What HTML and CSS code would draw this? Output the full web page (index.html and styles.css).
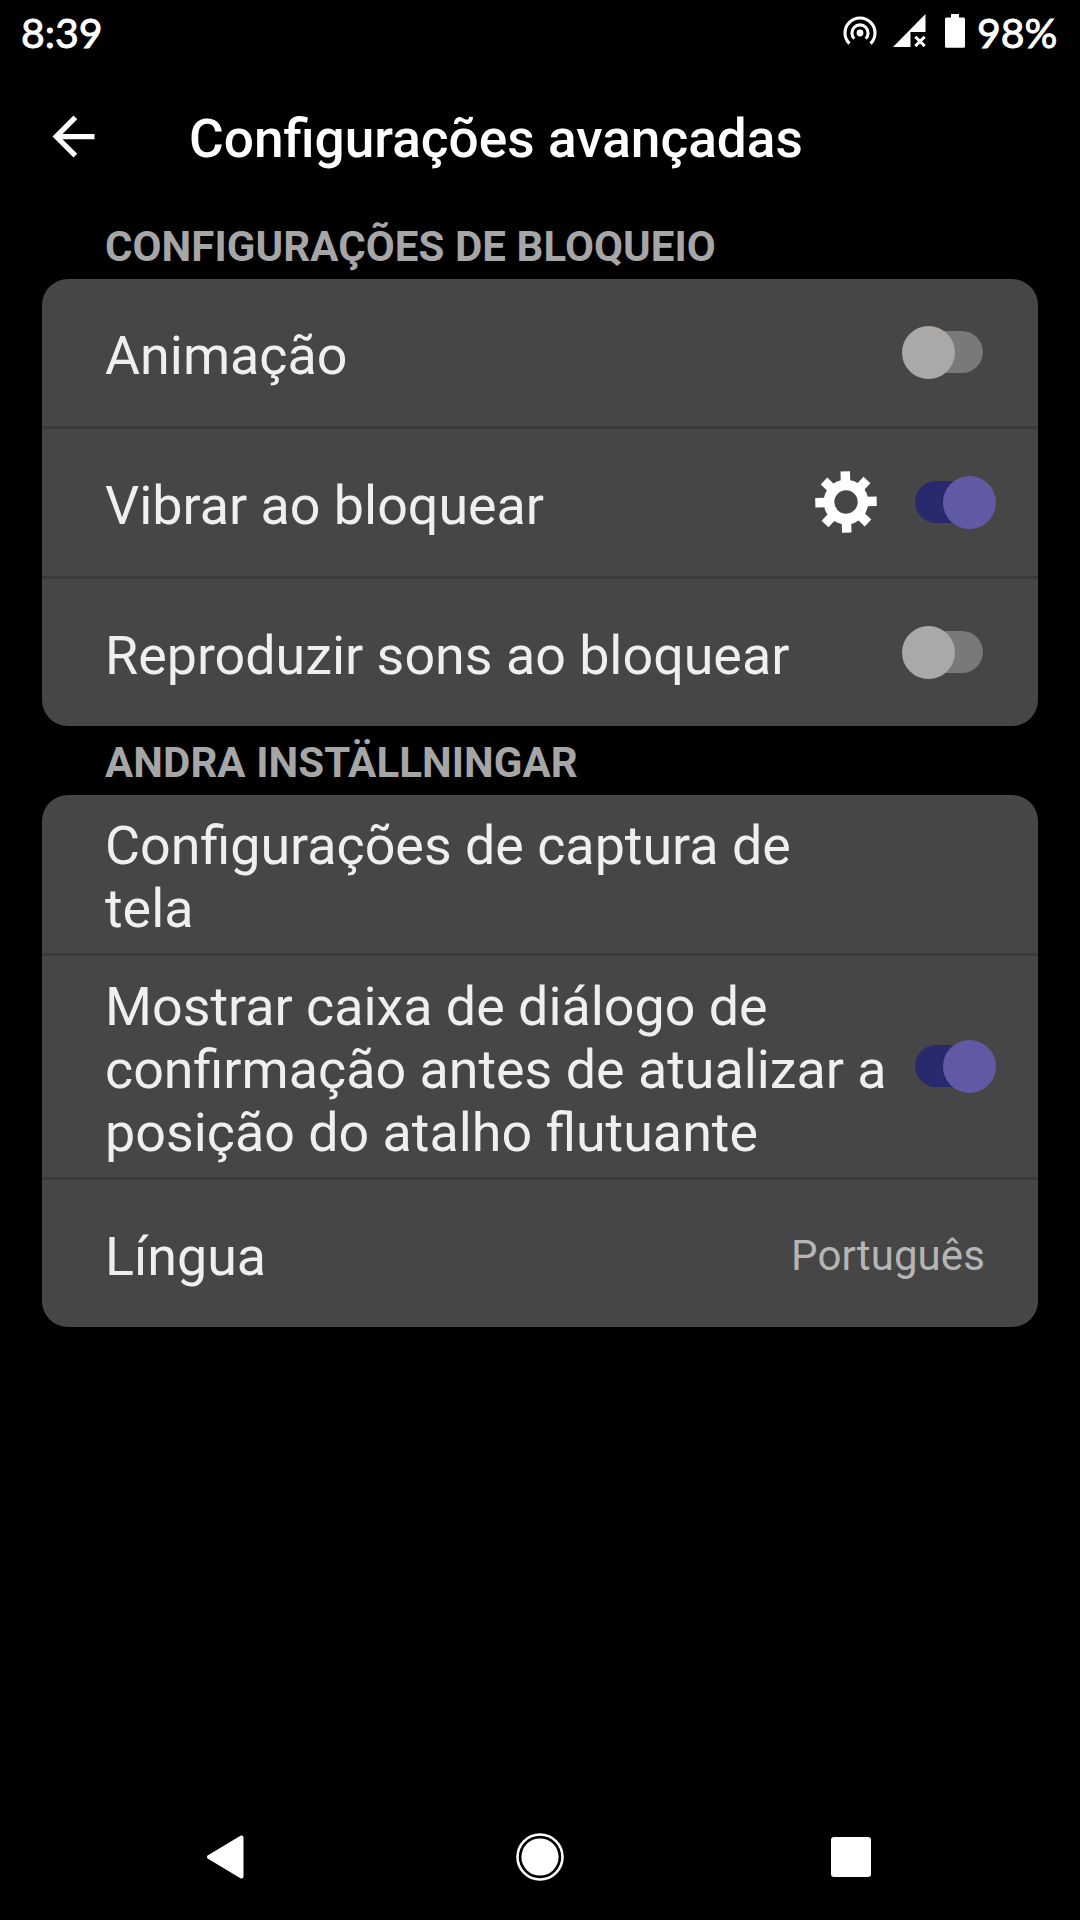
FILE: index.html
```html
<!DOCTYPE html>
<html lang="pt-BR">
<head>
  <meta charset="UTF-8" />
  <meta name="viewport" content="width=device-width, initial-scale=1.0"/>
  <title>Configurações avançadas</title>
  <link rel="stylesheet" href="styles.css">
</head>
<body>

<div class="status-bar">
  <span class="hora">8:39</span>
  <svg class="icone-hotspot" width="34" height="34" viewBox="0 0 34 34">
    <circle cx="17" cy="17" r="3.4" fill="#fff"/>
    <path d="M11.3 22.7A8.1 8.1 0 1 1 22.7 22.7M6.4 27.6A15 15 0 1 1 27.6 27.6" fill="none" stroke="#fff" stroke-width="3.1"/>
  </svg>
  <svg class="icone-sinal" width="33" height="33" viewBox="0 0 33 33">
    <path d="M0 33L32.5 0V18H17.5V33Z" fill="#fff"/>
    <path d="M22.3 22.7L31.7 32.1M31.7 22.7L22.3 32.1" stroke="#fff" stroke-width="3"/>
  </svg>
  <svg class="icone-bateria" width="20" height="34" viewBox="0 0 20 34">
    <path d="M6 0H14V3.5H18.5Q20 3.5 20 5V32.3Q20 33.8 18.5 33.8H1.5Q0 33.8 0 32.3V5Q0 3.5 1.5 3.5H6Z" fill="#fff"/>
  </svg>
  <span class="porcentagem">98%</span>
</div>

<header class="topo">
  <svg class="voltar" width="63" height="63" viewBox="0 0 24 24">
    <path d="M20 11H7.83l5.59-5.59L12 4l-8 8 8 8 1.41-1.41L7.83 13H20v-2z" fill="#fff"/>
  </svg>
  <h1>Configurações avançadas</h1>
</header>

<main>
  <h2>CONFIGURAÇÕES DE BLOQUEIO</h2>
  <div class="cartao">
    <div class="linha">
      <span class="texto">Animação</span>
      <div class="chave"></div>
    </div>
    <div class="linha">
      <span class="texto">Vibrar ao bloquear</span>
      <svg class="engrenagem" width="62" height="62" viewBox="-31 -31 62 62">
        <g transform="rotate(-1.4)" fill="none" stroke="#fff">
          <circle r="17" stroke-width="10.6"/>
          <path stroke-width="9.5" d="M0 -20V-30.7M0 20V30.7M-20 0H-30.7M20 0H30.7M14 -14L21.5 -21.5M14 14L21.5 21.5M-14 14L-21.5 21.5M-14 -14L-21.5 -21.5"/>
        </g>
      </svg>
      <div class="chave ligada"></div>
    </div>
    <div class="linha">
      <span class="texto">Reproduzir sons ao bloquear</span>
      <div class="chave"></div>
    </div>
  </div>

  <h2>ANDRA INSTÄLLNINGAR</h2>
  <div class="cartao">
    <div class="linha">
      <span class="texto">Configurações de captura de<br>tela</span>
    </div>
    <div class="linha">
      <span class="texto">Mostrar caixa de diálogo de<br>confirmação antes de atualizar a<br>posição do atalho flutuante</span>
      <div class="chave ligada"></div>
    </div>
    <div class="linha">
      <span class="texto">Língua</span>
      <span class="valor">Português</span>
    </div>
  </div>
</main>

<nav class="navegacao">
  <svg width="38" height="44" viewBox="0 0 38 44">
    <path d="M35.5 2.5V41.5L3 22Z" fill="#fff" stroke="#fff" stroke-width="4" stroke-linejoin="round"/>
  </svg>
  <svg class="inicio" width="48" height="48" viewBox="0 0 48 48">
    <circle cx="24" cy="24" r="22.5" fill="none" stroke="#fff" stroke-width="2.6"/>
    <circle cx="24" cy="24" r="18.6" fill="#fff"/>
  </svg>
  <svg width="40" height="40" viewBox="0 0 40 40">
    <rect width="40" height="40" rx="3" fill="#fff"/>
  </svg>
</nav>

</body>
</html>
```
FILE: styles.css
```css
* {
  box-sizing: border-box;
}
body {
  margin: 0;
  height: 1920px;
  display: flex;
  flex-direction: column;
  background-color: #000;
  color: #fff;
  font-family: Roboto, sans-serif;
  overflow: hidden;
}
svg {
  display: block;
  flex-shrink: 0;
}

/* Barra de status */
.status-bar {
  display: flex;
  align-items: flex-start;
  height: 63px;
  padding: 0 21px 0 21px;
  font-family: Lato, sans-serif;
  font-size: 41px;
  line-height: 50px;
  -webkit-text-stroke: 0.9px #fff;
}
.hora {
  margin-top: 8px;
}
.icone-hotspot {
  margin: 16px 0 0 auto;
}
.icone-sinal {
  margin: 14px 0 0 16px;
}
.icone-bateria {
  margin: 14px 0 0 19px;
}
.porcentagem {
  width: 82px;
  margin: 8px 0 0 12px;
}

/* Cabeçalho */
.topo {
  display: flex;
  align-items: center;
  height: 147px;
  padding-left: 42px;
}
h1 {
  margin: 6px 0 0 84px;
  font-size: 53.2px;
  font-weight: 500;
  line-height: 63px;
}
h2 {
  height: 69px;
  margin: 0;
  padding: 12px 0 0 63px;
  font-size: 42px;
  font-weight: 700;
  line-height: 49px;
  letter-spacing: 0.08px;
  color: #a6a6a6;
}

/* Cartões de opções */
main {
  flex: 1;
  padding: 0 42px;
}
.cartao {
  border-radius: 26px;
  background-color: #464646;
}
.linha {
  display: flex;
  align-items: center;
  min-height: 147px;
  padding: 0 42px 0 63px;
}
.linha + .linha {
  min-height: 150px;
  border-top: 3px solid #3a3a3a;
}
.texto {
  flex: 1;
  padding: 19px 0 13px;
  font-size: 53.8px;
  line-height: 63px;
  color: #efefef;
  white-space: nowrap;
}
.valor {
  margin: 3px 11px 0 0;
  font-size: 42px;
  line-height: 49px;
  letter-spacing: 0.1px;
  color: #b5b5b5;
}
.engrenagem {
  margin: 0 38px 1px 0;
}

/* Chave liga/desliga */
.chave {
  display: flex;
  align-items: center;
  width: 76px;
  height: 42px;
  margin: 0 13px 1px 5px;
  border-radius: 21px;
  background-color: #797979;
}
.chave::before {
  content: "";
  width: 53px;
  height: 53px;
  flex-shrink: 0;
  margin-left: -5px;
  border-radius: 50%;
  background-color: #aaa9a7;
}
.chave.ligada {
  margin: 0 5px 1px 0;
  background-color: #29296e;
}
.chave.ligada::before {
  margin-left: 28px;
  background-color: #6159a3;
}

/* Barra de navegação */
.navegacao {
  display: flex;
  align-items: center;
  justify-content: space-between;
  height: 126px;
  padding: 0 209px 0 206px;
}
.inicio {
  margin-left: 5px;
}
```
